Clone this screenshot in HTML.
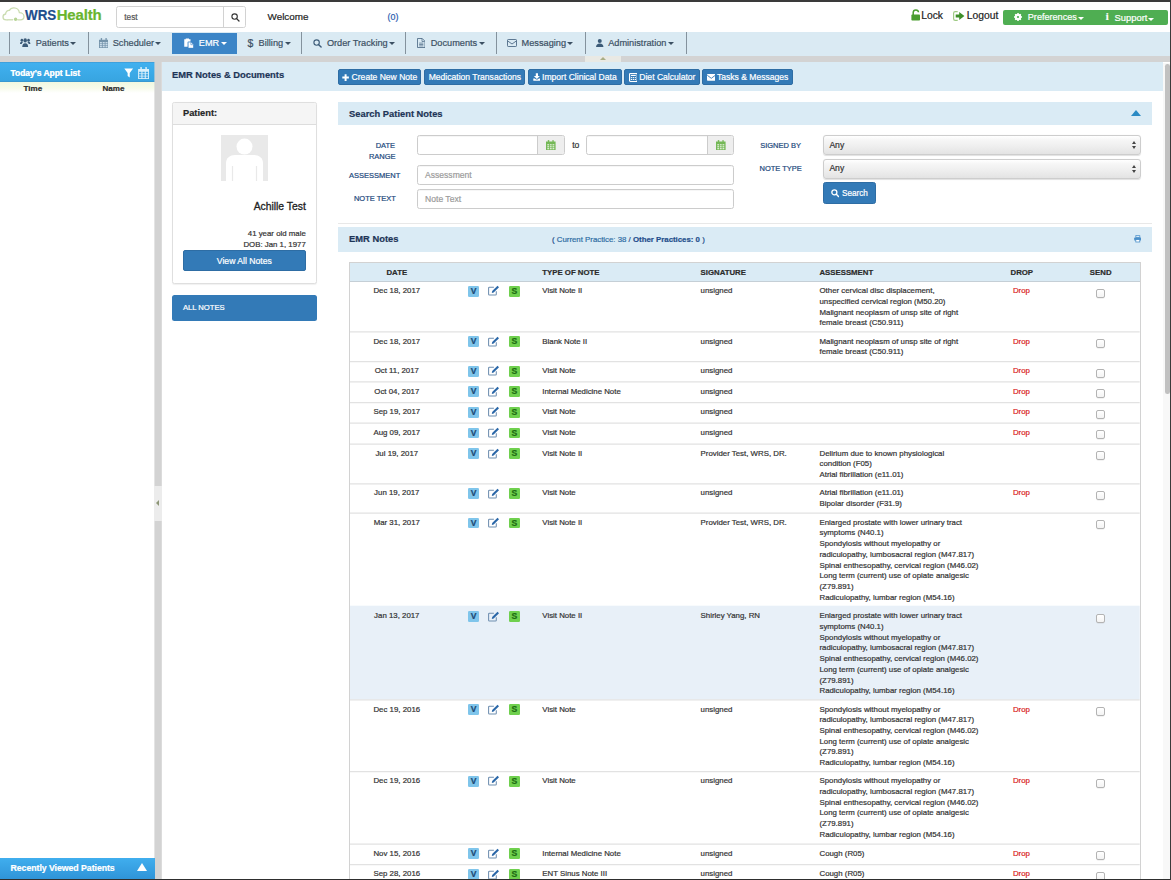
<!DOCTYPE html>
<html><head><meta charset="utf-8"><title>EMR Notes</title>
<style>
*{box-sizing:border-box;margin:0;padding:0}
html,body{width:1171px;height:880px;overflow:hidden;background:#fff}
body{font-family:"Liberation Sans",sans-serif;font-size:8.9px;color:#333;position:relative;-webkit-text-stroke:0.2px}
.abs{position:absolute}
#topline{left:0;top:0;width:1171px;height:1.8px;background:#3a3a3a}
#botline{left:0;top:878.8px;width:1171px;height:2px;background:#2e2e2e}
#rightline{left:1170px;top:0;width:1px;height:880px;background:#3a3a3a}
#logo{left:25px;top:4.7px;font-weight:bold;font-size:15px;line-height:19px;white-space:nowrap}
#logo span{position:absolute;top:0}
#logo .w{left:0.3px;transform:scaleX(0.895);transform-origin:0 0}
#logo .h{left:31.7px;letter-spacing:-0.17px}
#logo .w{color:#1e4e8c}#logo .h{color:#6ab52e}
#srch{left:116px;top:6.2px;width:130.4px;height:21.4px;border:1px solid #d2d2d2;border-radius:2.5px;background:#fff}
#srch .t{position:absolute;left:7.3px;top:4.9px;font-size:8.3px;color:#555}
#srch .b{position:absolute;right:0;top:0;width:22.6px;height:19.4px;border-left:1px solid #d2d2d2;background:#fff;border-radius:0 2px 2px 0}
#welcome{left:267.5px;top:10.5px;font-size:9.9px;color:#222}
#zero{left:387.5px;top:11.5px;font-size:8.9px;color:#2a5db0}
.hl{top:10.4px;font-size:10.3px;color:#222;white-space:nowrap}
#greenbar{left:1002.8px;top:9.7px;width:165.2px;height:14.9px;background:#4fae52;border-radius:2px;color:#fff;font-size:9.1px}
#greenbar span{position:absolute;top:2.7px;white-space:nowrap}
#nav{left:0;top:32px;width:1171px;height:23.5px;background:#daeaf3}
#graybar{left:0;top:55.5px;width:1171px;height:6.5px;background:#d3d3d3}
.nd{position:absolute;top:32px;width:1px;height:22px;background:#84929d}
.ni{position:absolute;top:32.7px;height:21.3px;font-size:9.2px;color:#3c5063;white-space:nowrap}
.ni .tx{position:absolute;top:4.9px}
.ni svg{position:absolute}
.caret{display:inline-block;width:0;height:0;border-left:3.1px solid transparent;border-right:3.1px solid transparent;border-top:3px solid currentColor;vertical-align:middle;margin-left:1.4px;margin-top:1.4px}

.dl{position:absolute;font-size:10.4px}
#emr{background:#3c85c7;color:#fff}
#handle{left:585.3px;top:55.5px;width:35.5px;height:7.6px;background:#e9e9e4}
#handle i{position:absolute;left:14.8px;top:1.6px;width:0;height:0;border-left:3.3px solid transparent;border-right:3.3px solid transparent;border-bottom:3.4px solid #a9ad85}
#sbh{left:0;top:62px;width:154.6px;height:19.8px;background:linear-gradient(#41b1f0,#37a4e0);box-shadow:inset 0 0.8px 0 rgba(60,120,170,.35),inset 0 -0.8px 0 rgba(60,120,170,.35);color:#fff;font-weight:bold;font-size:8.45px}
#sbh .tx{position:absolute;left:10.5px;top:6px;text-shadow:0 0 0.5px rgba(255,255,255,.6)}
#sbr{left:0;top:81.8px;width:154.6px;height:11.2px;background:linear-gradient(#f0f8e0,#f6fbea 55%,#fff);font-weight:bold;font-size:8.05px;color:#2b2b2b}
#split{left:154.6px;top:62.5px;width:7.2px;height:817px;background:#d2d2d2}
#splith{left:154px;top:486px;width:8.2px;height:35px;background:#ececec}
#splith i{position:absolute;left:1.8px;top:13.5px;width:0;height:0;border-top:3.3px solid transparent;border-bottom:3.3px solid transparent;border-right:3.8px solid #8d9677}
#rvp{left:0;top:857.8px;width:154.6px;height:21.2px;background:linear-gradient(#40aeee,#2f94d8);color:#fff;font-weight:bold;font-size:8.75px}
#rvp .tx{position:absolute;left:10.5px;top:5.6px;letter-spacing:-0.05px}
#rvp i{position:absolute;left:137.4px;top:5.2px;width:0;height:0;border-left:5.3px solid transparent;border-right:5.3px solid transparent;border-bottom:8.3px solid #fff}

#scrolltrack{left:1162.6px;top:62.5px;width:7.6px;height:817px;background:#f8f8f8}
#thumb{left:1165.2px;top:64px;width:4.6px;height:330.4px;background:#c1c1c1;border-radius:2.3px}
#titlebar{left:161.8px;top:62px;width:1001px;height:28.6px;background:#daebf5}
#title{left:172px;top:69.6px;font-size:9.35px;font-weight:bold;color:#1d3557;white-space:nowrap}
.tb{position:absolute;top:69.2px;height:15.4px;background:#337ab7;border-radius:2px;color:#fff;font-size:8.57px;white-space:nowrap;border:0.6px solid #2e6da4}
.tb span{position:absolute;top:1.7px}
.tb svg{position:absolute}
/* patient */
#pp{left:171.7px;top:101.5px;width:145px;height:182px;border:1px solid #dfdfdf;border-radius:2.5px;background:#fff;box-shadow:0 0.6px 1px rgba(0,0,0,.06)}
#pph{position:absolute;left:0;top:0;width:143px;height:22.5px;background:#f5f5f5;border-bottom:1px solid #ddd;border-radius:2px 2px 0 0}
#pph span{position:absolute;left:10.3px;top:5.8px;font-weight:bold;font-size:9.3px;color:#262626}
#photo{left:221px;top:135.4px;width:47px;height:45.6px;background:#e9e9e9;overflow:hidden}
#pname{left:172px;width:133.8px;top:200.6px;text-align:right;font-size:10.35px;color:#222;-webkit-text-stroke:0.3px #222}
.pinfo{left:172px;width:133.8px;text-align:right;font-size:7.85px;color:#333}
#van{left:183px;top:250px;width:122.7px;height:21.2px;background:#337ab7;border-radius:2px;color:#fff;font-size:8.65px;text-align:center;line-height:20.6px;border:0.6px solid #2e6da4}
#alln{left:171.7px;top:294.7px;width:145.1px;height:26.2px;background:#337ab7;border-radius:2.5px;color:#fff;font-size:7.65px;line-height:26.4px;padding-left:11.2px}
/* search panel */
.ph{position:absolute;left:338px;width:813.6px;background:#daebf5}
.ph b{position:absolute;left:11.1px;font-size:9.35px;margin-top:0.6px;color:#1d3557;white-space:nowrap}
.lbl{position:absolute;font-size:7.5px;color:#21487c;white-space:nowrap;line-height:10.6px;margin-top:0.8px}
.inp{position:absolute;border:1px solid #ccc;border-radius:2.5px;background:#fff;box-shadow:inset 0 0.6px 0.8px rgba(0,0,0,.08);font-size:8.55px;color:#9b9b9b}
.inp span{position:absolute;left:7.2px;top:3.9px}
.addon{position:absolute;right:0;top:0;bottom:0;width:26.4px;background:#eee;border-left:1px solid #ccc;border-radius:0 2px 2px 0}
.addon svg{position:absolute;left:8.2px;top:3.4px}
.sel{position:absolute;left:822.8px;width:318px;height:19.8px;border:1px solid #cdcdcd;border-radius:3px;background:linear-gradient(#fff,#f6f6f6 22%,#efefef 55%,#e3e3e3);font-size:8.6px;color:#333;box-shadow:0 0.5px 0.8px rgba(0,0,0,.12)}
.sel span{position:absolute;left:5.6px;top:3.7px}
.sel i{position:absolute;right:3.8px;width:0;height:0;border-left:2px solid transparent;border-right:2px solid transparent}
.sel i.u{top:5.2px;border-bottom:3px solid #444}
.sel i.d{top:10px;border-top:3px solid #444}
#sbtn{left:822.8px;top:182.3px;width:53.2px;height:21.4px;background:#337ab7;border-radius:2.5px;color:#fff;font-size:8.2px;border:0.6px solid #2e6da4}
#sbtn span{position:absolute;left:18.2px;top:5.5px}
#hr{left:338px;top:222.6px;width:813.6px;height:1px;background:#e8e8e8}
#cp{left:552px;top:235px;font-size:7.83px;white-space:nowrap;color:#1f4e8c}
#cp a{color:#2e6da4}
#cp b{color:#1f4e8c}
/* table */
#tbl{left:349.3px;top:262.2px;width:791.7px;height:640px;border:1px solid #d2d2d2;border-bottom:0}
#th{position:absolute;left:0;top:0;width:789.7px;height:19.2px;background:#daebf5;border-bottom:1px solid #c5cfd6;font-weight:bold;font-size:7.8px;color:#2b2b2b}
#th span{position:absolute;top:5px;white-space:nowrap}
.tr{position:absolute;left:350.3px;width:789.7px;font-size:7.85px;line-height:10.68px;color:#333}
.tr.hi{}
.tr>div{position:absolute;top:5.35px;white-space:nowrap}
.tr .dt{left:0;width:93px;text-align:center}
.tr .ty{left:192px}
.tr .sg{left:350.3px}
.tr .as{left:469.2px}
.tr .dr{left:646.1px;width:50px;text-align:center;color:#d9221c}
.tr .ck{left:746px;top:7.7px;width:9.2px;height:9.2px;border:1px solid #b3b3b3;border-radius:2px;background:linear-gradient(#fff,#f4f4f4);box-shadow:0 0.4px 0.6px rgba(0,0,0,.1)}
.tr .iv,.tr .is{top:5.1px;width:10.9px;height:10.7px;border-radius:1.3px;font-weight:bold;font-size:8.6px;line-height:10.9px;text-align:center}
.tr .iv{left:117.8px;background:#7fc5eb;color:#1c4a75}
.tr .is{left:158.6px;background:#6fd04e;color:#1d6b12}
.tr .ie{left:137.5px;top:4.5px}
</style></head><body>
<div class="abs" id="topline"></div>

<svg class="abs" style="left:1.5px;top:6.5px" width="24" height="15" viewBox="0 0 24 15"><path d="M5.5 12.8H4.2C2.3 12.8 1 11.5 1 9.9c0-1.5 1.1-2.7 2.6-2.9C3.7 4.6 5.4 3.2 7.4 3.4 8.3 1.8 10 .9 11.900.9c2.900 0 5.200 2.100 5.500 4.800 2.300.1 4.600 1.600 4.600 3.800 0 1.900-1.600 3.300-3.600 3.300h-2.600" fill="none" stroke="#cadcb0" stroke-width="1.300" stroke-linecap="round"/><path d="M5.500 12.800h5.500" stroke="#cadcb0" stroke-width="1.300"/><circle cx="13.600" cy="12.300" r="1.700" fill="#b7d496"/></svg>
<div class="abs" id="logo"><span class="w">WRS</span><span class="h">Health</span></div>
<div class="abs" id="srch"><span class="t">test</span><div class="b"><svg style="position:absolute;left:7px;top:5.6px" width="9" height="9" viewBox="0 0 9 9"><circle cx="3.6" cy="3.6" r="2.7" fill="none" stroke="#333" stroke-width="1.1"/><path d="M5.600 5.600L8 8" stroke="#333" stroke-width="1.300" stroke-linecap="round"/></svg></div></div>
<div class="abs" id="welcome">Welcome</div>
<div class="abs" id="zero">(0)</div>
<svg class="abs" style="left:910.5px;top:8.6px" width="10" height="12" viewBox="0 0 10 12"><path d="M2.2 6V3.6C2.2 1.9 3.4.9 4.9.9c1.400 0 2.500.9 2.600 2.300" fill="none" stroke="#4a9d2f" stroke-width="1.500"/><rect x=".4" y="5.600" width="8.600" height="6" rx=".8" fill="#4a9d2f"/></svg>
<div class="abs hl" style="left:921.2px">Lock</div>
<svg class="abs" style="left:952.9px;top:10.5px" width="11.8" height="10" viewBox="0 0 11.8 10"><path d="M4.7.6H2.2C1.3.6.6 1.300.6 2.200v5.600c0 .9.700 1.600 1.600 1.600h2.500" fill="none" stroke="#9fca84" stroke-width="1.200"/><path d="M2.700 3.500h3.500V.9l5.200 4.100-5.200 4.100V6.500H2.700z" fill="#3f8f2a"/></svg>
<div class="abs hl" style="left:966.8px">Logout</div>
<div class="abs" id="greenbar">
<svg style="position:absolute;left:11.7px;top:3.600px" width="8" height="8" viewBox="0 0 8 8"><circle cx="4" cy="4" r="2.300" fill="none" stroke="#fff" stroke-width="1.900"/><g stroke="#fff" stroke-width="1.500"><path d="M4 0v8M0 4h8M1.200 1.200l5.600 5.600M6.800 1.200L1.200 6.800"/></g><circle cx="4" cy="4" r="1.100" fill="#4fae52"/></svg>
<span style="left:25px">Preferences<i class="caret" style="margin-left:0.8px"></i></span>
<span style="left:103px;top:1.2px;font-family:'Liberation Serif',serif;font-weight:bold;font-size:10.5px">i</span>
<span style="left:111.8px;font-size:9.4px;top:2.5px">Support<i class="caret" style="margin-left:0.8px"></i></span>
</div>
<div class="abs" id="nav"></div><div class="abs" id="graybar"></div><div class="abs" id="handle"><i></i></div><div class="nd" style="left:9px"></div><div class="nd" style="left:88px"></div><div class="nd" style="left:301px"></div><div class="nd" style="left:405px"></div><div class="nd" style="left:496px"></div><div class="nd" style="left:585px"></div><div class="nd" style="left:686px"></div><div class="ni"  style="left:9.5px;width:78px"><svg style="left:10.9px;top:5.4px" width="10.4" height="9.2" viewBox="0 0 21 16" preserveAspectRatio="none"><g fill="#3c5b78"><circle cx="10.5" cy="4.2" r="3.6"/><path d="M4.5 16c0-4.2 1.8-7 6-7s6 2.8 6 7z"/><circle cx="3.8" cy="3.8" r="2.6"/><path d="M0 10.5c0-2.8 1.3-4.4 3.8-4.400 1 0 1.900.3 2.500.9-1.600 1-2.600 2.400-2.900 3.500z"/><circle cx="17.200" cy="3.800" r="2.600"/><path d="M21 10.500c0-2.800-1.300-4.400-3.800-4.400-1 0-1.900.3-2.500.9 1.600 1 2.600 2.400 2.900 3.500z"/></g></svg><span class="tx" style="left:26.2px">Patients<i class="caret"></i></span></div><div class="ni"  style="left:87.8px;width:84px"><svg style="left:11.2px;top:5.4px" width="9.5" height="10" viewBox="0 0 19 20"><g fill="#7493aa"><rect x="3.5" y="0" width="2.6" height="5" rx="1"/><rect x="12.9" y="0" width="2.6" height="5" rx="1"/><path d="M0 3.500h19V20H0z"/></g><g fill="#c9dbe8"><rect x="1.8" y="8" width="4" height="2.8"/><rect x="7.4" y="8" width="4" height="2.8"/><rect x="13" y="8" width="4" height="2.8"/><rect x="1.8" y="11.9" width="4" height="2.8"/><rect x="7.4" y="11.9" width="4" height="2.8"/><rect x="13" y="11.9" width="4" height="2.8"/><rect x="1.8" y="15.8" width="4" height="2.8"/><rect x="7.4" y="15.8" width="4" height="2.8"/><rect x="13" y="15.8" width="4" height="2.8"/></g></svg><span class="tx" style="left:24.9px">Scheduler<i class="caret"></i></span></div><div class="ni" id="emr" style="left:172.2px;width:64.8px"><svg style="left:11.4px;top:5.2px" width="10" height="10.5" viewBox="0 0 20 21"><path d="M.5 2.500h3V1H10v1.500h3V7.500H7.500v10H.5z" fill="#fff"/><path d="M8.300 8.200h5.800l4.900 4.900v7.400H8.300z" fill="#fff" stroke="#3c85c7" stroke-width="1.300"/><path d="M13.700 8.400v5h5" fill="none" stroke="#3c85c7" stroke-width="1.200"/></svg><span class="tx" style="left:26.6px">EMR<i class="caret"></i></span></div><div class="ni"  style="left:237px;width:64px"><span style="left:10.4px;top:5.4px" class="dl">$</span><span class="tx" style="left:21.6px">Billing<i class="caret"></i></span></div><div class="ni"  style="left:301.3px;width:104px"><svg style="left:11.4px;top:6.4px" width="9" height="9" viewBox="0 0 9 9"><circle cx="3.600" cy="3.600" r="2.700" fill="none" stroke="#3c5b78" stroke-width="1.100"/><path d="M5.700 5.700L8.100 8.100" stroke="#3c5b78" stroke-width="1.400" stroke-linecap="round"/></svg><span class="tx" style="left:25.6px">Order Tracking<i class="caret"></i></span></div><div class="ni"  style="left:405.3px;width:90px"><svg style="left:11.6px;top:5.4px" width="8.5" height="10" viewBox="0 0 17 20"><path d="M1 1h9.500L16 6.500V19H1z" fill="none" stroke="#3c5b78" stroke-width="1.500"/><path d="M10 1.500v5.500h5.500M4.300 10.200h8.400M4.300 13h8.400M4.300 15.800h8.400" fill="none" stroke="#3c5b78" stroke-width="1.300"/></svg><span class="tx" style="left:25.4px">Documents<i class="caret"></i></span></div><div class="ni"  style="left:496px;width:89px"><svg style="left:10.8px;top:6.7px" width="10" height="8" viewBox="0 0 20 16"><rect x="1" y="1" width="18" height="14" rx="1.500" fill="none" stroke="#3c5b78" stroke-width="1.600"/><path d="M1.500 4l8.500 6 8.500-6" fill="none" stroke="#3c5b78" stroke-width="1.600"/></svg><span class="tx" style="left:25.6px">Messaging<i class="caret"></i></span></div><div class="ni"  style="left:585.2px;width:101px"><svg style="left:11px;top:6px" width="7.5" height="8.5" viewBox="0 0 15 17"><g fill="#3c5b78"><circle cx="7.500" cy="4.200" r="4"/><path d="M0 17c0-5.200 2.400-8.200 7.500-8.200S15 11.800 15 17z"/></g></svg><span class="tx" style="left:23px">Administration<i class="caret"></i></span></div>
<div class="abs" id="sbh"><span class="tx">Today's Appt List</span>
<svg style="position:absolute;left:124.2px;top:5.5px" width="9.4" height="10.4" viewBox="0 0 9 9" preserveAspectRatio="none"><path d="M.3.4h8.400L5.500 4.300V8.200L3.500 6.900V4.300z" fill="#fff"/></svg>
<svg style="position:absolute;left:137.6px;top:5px" width="11.2" height="12" viewBox="0 0 22 24"><g fill="#d9f0fb"><rect x="4.5" y="0" width="3" height="6" rx="1.2"/><rect x="14.5" y="0" width="3" height="6" rx="1.2"/><path d="M0 4h22v20H0z"/></g><g fill="#3ea6e3"><rect x="2" y="9.5" width="4.6" height="3.3"/><rect x="8.7" y="9.5" width="4.6" height="3.3"/><rect x="15.4" y="9.5" width="4.6" height="3.3"/><rect x="2" y="14.2" width="4.6" height="3.3"/><rect x="8.7" y="14.2" width="4.6" height="3.3"/><rect x="15.4" y="14.2" width="4.6" height="3.3"/><rect x="2" y="18.9" width="4.6" height="3.3"/><rect x="8.7" y="18.9" width="4.6" height="3.3"/><rect x="15.4" y="18.9" width="4.6" height="3.3"/></g></svg>
</div>
<div class="abs" id="sbr"><span style="position:absolute;left:23.5px;top:1.8px">Time</span><span style="position:absolute;left:102.5px;top:1.8px">Name</span></div>
<svg class="abs" style="left:150px;top:62px" width="16" height="818" viewBox="150 62 16 818"><rect x="154.4" y="62" width="7.4" height="818" fill="#d3d3d3"/></svg><div class="abs" id="splith"><i></i></div>
<div class="abs" id="rvp"><span class="tx">Recently Viewed Patients</span><i></i></div>
<div class="abs" id="scrolltrack"></div><div class="abs" id="thumb"></div><div class="abs" id="titlebar"></div><div class="abs" id="title">EMR Notes &amp; Documents</div><div class="tb" style="left:338.2px;width:83px"><svg style="left:3.3px;top:3.7px" width="7.2" height="7.2" viewBox="0 0 7 7"><path d="M3.5.3v6.400M.3 3.500h6.400" stroke="#fff" stroke-width="1.900"/></svg><span style="left:12.4px">Create New Note</span></div><div class="tb" style="left:424px;width:101.4px"><span style="left:3.7px">Medication Transactions</span></div><div class="tb" style="left:528px;width:93.6px"><svg style="left:3.7px;top:3.2px" width="7.8" height="8" viewBox="0 0 7.6 8"><path d="M2.700.2h2.200v2.900h1.900L3.800 5.900.8 3.100h1.900z" fill="#fff"/><path d="M.2 5.400h1.600l1.200 1.100h1.600l1.200-1.100h1.600v2.400H.2z" fill="#fff"/></svg><span style="left:13px">Import Clinical Data</span></div><div class="tb" style="left:624.2px;width:75.8px"><svg style="left:3.5px;top:2.9px" width="8.8" height="9" viewBox="0 0 7.6 8.6" preserveAspectRatio="none"><rect x=".5" y=".5" width="6.600" height="7.600" rx=".6" fill="none" stroke="#fff" stroke-width="1"/><path d="M1.700 2.300h4.200" stroke="#fff" stroke-width="1.100"/><g fill="#fff"><rect x="1.600" y="3.900" width="1.100" height="1"/><rect x="3.250" y="3.900" width="1.100" height="1"/><rect x="4.900" y="3.900" width="1.100" height="1"/><rect x="1.600" y="5.700" width="1.100" height="1"/><rect x="3.250" y="5.700" width="1.100" height="1"/><rect x="4.900" y="5.700" width="1.100" height="1"/></g></svg><span style="left:14.1px">Diet Calculator</span></div><div class="tb" style="left:702px;width:90.8px"><svg style="left:3.9px;top:4px" width="8.600" height="6.800" viewBox="0 0 8.600 6.800"><rect width="8.600" height="6.800" rx=".8" fill="#fff"/><path d="M.3 1.300l4 3 4-3" fill="none" stroke="#337ab7" stroke-width=".9"/></svg><span style="left:13.9px">Tasks &amp; Messages</span></div><div class="abs" id="pp"><div id="pph"><span>Patient:</span></div></div><div class="abs" id="photo"><svg width="47" height="45.6" viewBox="0 0 47 45.6"><circle cx="23.500" cy="11.600" r="8" fill="#fff"/><path d="M5 46V28c0-5 4-8 9-8h19c5 0 9 3 9 8v18z" fill="#fff"/><path d="M11.500 46V31M35.500 46V31" stroke="#e9e9e9" stroke-width="1.200"/></svg></div><div class="abs" id="pname">Achille Test</div><div class="abs pinfo" style="top:229.2px">41 year old male</div><div class="abs pinfo" style="top:239.5px">DOB: Jan 1, 1977</div><div class="abs" id="van">View All Notes</div><div class="abs" id="alln">ALL NOTES</div><div class="ph" style="top:101.8px;height:23px"><b style="top:6.2px">Search Patient Notes</b><i style="position:absolute;left:792.8px;top:7.9px;width:0;height:0;border-left:5.1px solid transparent;border-right:5.1px solid transparent;border-bottom:6px solid #2a8ac4"></i></div><div class="lbl" style="left:368.9px;top:140.2px;width:26.2px;text-align:right;white-space:normal">DATE RANGE</div><div class="lbl" style="left:349.1px;top:169.900px">ASSESSMENT</div><div class="lbl" style="left:353.9px;top:193.700px">NOTE TEXT</div><div class="lbl" style="left:760.2px;top:139.900px">SIGNED BY</div><div class="lbl" style="left:759.5px;top:163.500px">NOTE TYPE</div><div class="inp" style="left:416.9px;top:135.2px;width:147.8px;height:19.9px"><div class="addon"><svg width="9.6" height="10.2" viewBox="0 0 9.6 10.2"><g fill="#74b856"><rect x="1.9" y="0" width="1.3" height="2.6" rx=".5"/><rect x="6.4" y="0" width="1.3" height="2.6" rx=".5"/><path d="M0 1.500h9.600v8.700H0z"/></g><g fill="#e6f2df"><rect x="1.3" y="4.2" width="1.8" height="1.2"/><rect x="3.9" y="4.2" width="1.8" height="1.2"/><rect x="6.5" y="4.2" width="1.8" height="1.2"/><rect x="1.3" y="6.2" width="1.8" height="1.2"/><rect x="3.9" y="6.2" width="1.8" height="1.2"/><rect x="6.5" y="6.2" width="1.8" height="1.2"/><rect x="1.3" y="8.1" width="1.8" height="1.2"/><rect x="3.9" y="8.1" width="1.8" height="1.2"/><rect x="6.5" y="8.1" width="1.8" height="1.2"/></g></svg></div></div><div class="abs" style="left:572.2px;top:140.200px;font-size:8.6px;color:#333">to</div><div class="inp" style="left:586.3px;top:135.2px;width:147.9px;height:19.9px"><div class="addon"><svg width="9.6" height="10.2" viewBox="0 0 9.6 10.2"><g fill="#74b856"><rect x="1.9" y="0" width="1.3" height="2.6" rx=".5"/><rect x="6.4" y="0" width="1.3" height="2.6" rx=".5"/><path d="M0 1.500h9.600v8.700H0z"/></g><g fill="#e6f2df"><rect x="1.3" y="4.2" width="1.8" height="1.2"/><rect x="3.9" y="4.2" width="1.8" height="1.2"/><rect x="6.5" y="4.2" width="1.8" height="1.2"/><rect x="1.3" y="6.2" width="1.8" height="1.2"/><rect x="3.9" y="6.2" width="1.8" height="1.2"/><rect x="6.5" y="6.2" width="1.8" height="1.2"/><rect x="1.3" y="8.1" width="1.8" height="1.2"/><rect x="3.9" y="8.1" width="1.8" height="1.2"/><rect x="6.5" y="8.1" width="1.8" height="1.2"/></g></svg></div></div><div class="inp" style="left:416.9px;top:165.2px;width:317.300px;height:19.6px"><span>Assessment</span></div><div class="inp" style="left:416.9px;top:188.9px;width:317.300px;height:19.8px"><span>Note Text</span></div><div class="sel" style="top:135.300px"><span>Any</span><i class="u"></i><i class="d"></i></div><div class="sel" style="top:158.800px"><span>Any</span><i class="u"></i><i class="d"></i></div><div class="abs" id="sbtn"><svg style="position:absolute;left:6.8px;top:6.2px" width="8.400" height="8.400" viewBox="0 0 9 9"><circle cx="3.600" cy="3.600" r="2.700" fill="none" stroke="#fff" stroke-width="1.400"/><path d="M5.700 5.700L8.100 8.100" stroke="#fff" stroke-width="1.600" stroke-linecap="round"/></svg><span>Search</span></div><div class="abs" id="hr"></div><div class="ph" style="top:227.300px;height:24.300px"><b style="top:5.9px">EMR Notes</b></div><div class="abs" id="cp">( <a>Current Practice: 38</a> / <b>Other Practices: 0</b> )</div><svg class="abs" style="left:1133.600px;top:235.200px" width="7.600" height="7.400" viewBox="0 0 7.600 7.400"><path d="M1.800.4h4v2.200h-4z" fill="none" stroke="#4a8fc9" stroke-width=".8"/><rect x=".2" y="2.600" width="7.200" height="3" rx=".7" fill="#4a8fc9"/><rect x="1.800" y="4.600" width="4" height="2.400" fill="#fff" stroke="#4a8fc9" stroke-width=".8"/></svg><div class="abs" id="tbl"><div id="th"><span style="left:0;width:93px;text-align:center">DATE</span><span style="left:192px">TYPE OF NOTE</span><span style="left:350.300px">SIGNATURE</span><span style="left:469.200px">ASSESSMENT</span><span style="left:646.500px;width:50px;text-align:center">DROP</span><span style="left:725.400px;width:50px;text-align:center">SEND</span></div></div><svg class="abs" style="left:350.3px;top:281px;pointer-events:none" width="789.7" height="599" viewBox="350.3 281 789.7 599"><rect x="350.3" y="605.70" width="789.7" height="93.60" fill="#e8f0f8"/><path d="M350.3 331.95H1140" stroke="#e2e2e2" stroke-width="1.25"/><path d="M350.3 361.55H1140" stroke="#e2e2e2" stroke-width="1.25"/><path d="M350.3 381.95H1140" stroke="#e2e2e2" stroke-width="1.25"/><path d="M350.3 402.65H1140" stroke="#e2e2e2" stroke-width="1.25"/><path d="M350.3 423.15H1140" stroke="#e2e2e2" stroke-width="1.25"/><path d="M350.3 444.05H1140" stroke="#e2e2e2" stroke-width="1.25"/><path d="M350.3 483.85H1140" stroke="#e2e2e2" stroke-width="1.25"/><path d="M350.3 513.15H1140" stroke="#e2e2e2" stroke-width="1.25"/><path d="M350.3 699.95H1140" stroke="#e2e2e2" stroke-width="1.25"/><path d="M350.3 771.55H1140" stroke="#e2e2e2" stroke-width="1.25"/><path d="M350.3 844.05H1140" stroke="#e2e2e2" stroke-width="1.25"/><path d="M350.3 864.75H1140" stroke="#e2e2e2" stroke-width="1.25"/></svg><div class="tr" style="top:280.85px;height:50.40px"><div class="dt">Dec 18, 2017</div><div class="iv">V</div><svg class="ie" style="position:absolute" width="11.600" height="11" viewBox="0 0 11.600 11"><path d="M8.300 6.300v2.900c0 .5-.4.900-.9.900H1.500c-.5 0-.9-.4-.9-.9V3.100c0-.5.400-.9.900-.9h4.400" fill="none" stroke="#6f8fb0" stroke-width="1.050"/><path d="M3.800 8l.4-2L9.500.7l1.500 1.500-5.300 5.300z" fill="#2a67a8"/></svg><div class="is">S</div><div class="ty">Visit Note II</div><div class="sg">unsigned</div><div class="as">Other cervical disc displacement,<br>unspecified cervical region (M50.20)<br>Malignant neoplasm of unsp site of right<br>female breast (C50.911)</div><div class="dr">Drop</div><div class="ck"></div></div><div class="tr" style="top:331.25px;height:29.60px"><div class="dt">Dec 18, 2017</div><div class="iv">V</div><svg class="ie" style="position:absolute" width="11.600" height="11" viewBox="0 0 11.600 11"><path d="M8.300 6.300v2.900c0 .5-.4.900-.9.900H1.500c-.5 0-.9-.4-.9-.9V3.100c0-.5.400-.9.900-.9h4.400" fill="none" stroke="#6f8fb0" stroke-width="1.050"/><path d="M3.800 8l.4-2L9.500.7l1.500 1.500-5.300 5.300z" fill="#2a67a8"/></svg><div class="is">S</div><div class="ty">Blank Note II</div><div class="sg">unsigned</div><div class="as">Malignant neoplasm of unsp site of right<br>female breast (C50.911)</div><div class="dr">Drop</div><div class="ck"></div></div><div class="tr" style="top:360.85px;height:20.40px"><div class="dt">Oct 11, 2017</div><div class="iv">V</div><svg class="ie" style="position:absolute" width="11.600" height="11" viewBox="0 0 11.600 11"><path d="M8.300 6.300v2.900c0 .5-.4.900-.9.900H1.500c-.5 0-.9-.4-.9-.9V3.100c0-.5.400-.9.900-.9h4.400" fill="none" stroke="#6f8fb0" stroke-width="1.050"/><path d="M3.800 8l.4-2L9.500.7l1.500 1.500-5.300 5.300z" fill="#2a67a8"/></svg><div class="is">S</div><div class="ty">Visit Note</div><div class="sg">unsigned</div><div class="as"></div><div class="dr">Drop</div><div class="ck"></div></div><div class="tr" style="top:381.25px;height:20.70px"><div class="dt">Oct 04, 2017</div><div class="iv">V</div><svg class="ie" style="position:absolute" width="11.600" height="11" viewBox="0 0 11.600 11"><path d="M8.300 6.300v2.900c0 .5-.4.900-.9.900H1.500c-.5 0-.9-.4-.9-.9V3.100c0-.5.400-.9.900-.9h4.400" fill="none" stroke="#6f8fb0" stroke-width="1.050"/><path d="M3.800 8l.4-2L9.500.7l1.500 1.500-5.300 5.300z" fill="#2a67a8"/></svg><div class="is">S</div><div class="ty">Internal Medicine Note</div><div class="sg">unsigned</div><div class="as"></div><div class="dr">Drop</div><div class="ck"></div></div><div class="tr" style="top:401.95px;height:20.50px"><div class="dt">Sep 19, 2017</div><div class="iv">V</div><svg class="ie" style="position:absolute" width="11.600" height="11" viewBox="0 0 11.600 11"><path d="M8.300 6.300v2.900c0 .5-.4.900-.9.900H1.500c-.5 0-.9-.4-.9-.9V3.100c0-.5.400-.9.900-.9h4.400" fill="none" stroke="#6f8fb0" stroke-width="1.050"/><path d="M3.800 8l.4-2L9.500.7l1.500 1.500-5.300 5.300z" fill="#2a67a8"/></svg><div class="is">S</div><div class="ty">Visit Note</div><div class="sg">unsigned</div><div class="as"></div><div class="dr">Drop</div><div class="ck"></div></div><div class="tr" style="top:422.45px;height:20.90px"><div class="dt">Aug 09, 2017</div><div class="iv">V</div><svg class="ie" style="position:absolute" width="11.600" height="11" viewBox="0 0 11.600 11"><path d="M8.300 6.300v2.900c0 .5-.4.900-.9.900H1.500c-.5 0-.9-.4-.9-.9V3.100c0-.5.400-.9.900-.9h4.400" fill="none" stroke="#6f8fb0" stroke-width="1.050"/><path d="M3.800 8l.4-2L9.500.7l1.500 1.500-5.300 5.300z" fill="#2a67a8"/></svg><div class="is">S</div><div class="ty">Visit Note</div><div class="sg">unsigned</div><div class="as"></div><div class="dr">Drop</div><div class="ck"></div></div><div class="tr" style="top:443.35px;height:39.80px"><div class="dt">Jul 19, 2017</div><div class="iv">V</div><svg class="ie" style="position:absolute" width="11.600" height="11" viewBox="0 0 11.600 11"><path d="M8.300 6.300v2.900c0 .5-.4.900-.9.900H1.500c-.5 0-.9-.4-.9-.9V3.100c0-.5.400-.9.900-.9h4.400" fill="none" stroke="#6f8fb0" stroke-width="1.050"/><path d="M3.800 8l.4-2L9.500.7l1.500 1.500-5.300 5.300z" fill="#2a67a8"/></svg><div class="is">S</div><div class="ty">Visit Note II</div><div class="sg">Provider Test, WRS, DR.</div><div class="as">Delirium due to known physiological<br>condition (F05)<br>Atrial fibrillation (e11.01)</div><div class="ck"></div></div><div class="tr" style="top:483.15px;height:29.30px"><div class="dt">Jun 19, 2017</div><div class="iv">V</div><svg class="ie" style="position:absolute" width="11.600" height="11" viewBox="0 0 11.600 11"><path d="M8.300 6.300v2.900c0 .5-.4.900-.9.900H1.500c-.5 0-.9-.4-.9-.9V3.100c0-.5.400-.9.900-.9h4.400" fill="none" stroke="#6f8fb0" stroke-width="1.050"/><path d="M3.800 8l.4-2L9.500.7l1.500 1.500-5.300 5.300z" fill="#2a67a8"/></svg><div class="is">S</div><div class="ty">Visit Note</div><div class="sg">unsigned</div><div class="as">Atrial fibrillation (e11.01)<br>Bipolar disorder (F31.9)</div><div class="dr">Drop</div><div class="ck"></div></div><div class="tr" style="top:512.45px;height:93.60px"><div class="dt">Mar 31, 2017</div><div class="iv">V</div><svg class="ie" style="position:absolute" width="11.600" height="11" viewBox="0 0 11.600 11"><path d="M8.300 6.300v2.900c0 .5-.4.900-.9.900H1.500c-.5 0-.9-.4-.9-.9V3.100c0-.5.400-.9.900-.9h4.400" fill="none" stroke="#6f8fb0" stroke-width="1.050"/><path d="M3.800 8l.4-2L9.500.7l1.500 1.500-5.300 5.300z" fill="#2a67a8"/></svg><div class="is">S</div><div class="ty">Visit Note II</div><div class="sg">Provider Test, WRS, DR.</div><div class="as">Enlarged prostate with lower urinary tract<br>symptoms (N40.1)<br>Spondylosis without myelopathy or<br>radiculopathy, lumbosacral region (M47.817)<br>Spinal enthesopathy, cervical region (M46.02)<br>Long term (current) use of opiate analgesic<br>(Z79.891)<br>Radiculopathy, lumbar region (M54.16)</div><div class="ck"></div></div><div class="tr hi" style="top:606.05px;height:93.20px"><div class="dt">Jan 13, 2017</div><div class="iv">V</div><svg class="ie" style="position:absolute" width="11.600" height="11" viewBox="0 0 11.600 11"><path d="M8.300 6.300v2.900c0 .5-.4.900-.9.900H1.500c-.5 0-.9-.4-.9-.9V3.100c0-.5.400-.9.900-.9h4.400" fill="none" stroke="#6f8fb0" stroke-width="1.050"/><path d="M3.800 8l.4-2L9.500.7l1.500 1.500-5.300 5.300z" fill="#2a67a8"/></svg><div class="is">S</div><div class="ty">Visit Note II</div><div class="sg">Shirley Yang, RN</div><div class="as">Enlarged prostate with lower urinary tract<br>symptoms (N40.1)<br>Spondylosis without myelopathy or<br>radiculopathy, lumbosacral region (M47.817)<br>Spinal enthesopathy, cervical region (M46.02)<br>Long term (current) use of opiate analgesic<br>(Z79.891)<br>Radiculopathy, lumbar region (M54.16)</div><div class="ck"></div></div><div class="tr" style="top:699.25px;height:71.60px"><div class="dt">Dec 19, 2016</div><div class="iv">V</div><svg class="ie" style="position:absolute" width="11.600" height="11" viewBox="0 0 11.600 11"><path d="M8.300 6.300v2.900c0 .5-.4.900-.9.900H1.500c-.5 0-.9-.4-.9-.9V3.100c0-.5.400-.9.900-.9h4.400" fill="none" stroke="#6f8fb0" stroke-width="1.050"/><path d="M3.800 8l.4-2L9.500.7l1.500 1.500-5.300 5.300z" fill="#2a67a8"/></svg><div class="is">S</div><div class="ty">Visit Note</div><div class="sg">unsigned</div><div class="as">Spondylosis without myelopathy or<br>radiculopathy, lumbosacral region (M47.817)<br>Spinal enthesopathy, cervical region (M46.02)<br>Long term (current) use of opiate analgesic<br>(Z79.891)<br>Radiculopathy, lumbar region (M54.16)</div><div class="dr">Drop</div><div class="ck"></div></div><div class="tr" style="top:770.85px;height:72.50px"><div class="dt">Dec 19, 2016</div><div class="iv">V</div><svg class="ie" style="position:absolute" width="11.600" height="11" viewBox="0 0 11.600 11"><path d="M8.300 6.300v2.900c0 .5-.4.900-.9.900H1.500c-.5 0-.9-.4-.9-.9V3.100c0-.5.400-.9.900-.9h4.400" fill="none" stroke="#6f8fb0" stroke-width="1.050"/><path d="M3.800 8l.4-2L9.500.7l1.500 1.500-5.300 5.300z" fill="#2a67a8"/></svg><div class="is">S</div><div class="ty">Visit Note</div><div class="sg">unsigned</div><div class="as">Spondylosis without myelopathy or<br>radiculopathy, lumbosacral region (M47.817)<br>Spinal enthesopathy, cervical region (M46.02)<br>Long term (current) use of opiate analgesic<br>(Z79.891)<br>Radiculopathy, lumbar region (M54.16)</div><div class="dr">Drop</div><div class="ck"></div></div><div class="tr" style="top:843.35px;height:20.70px"><div class="dt">Nov 15, 2016</div><div class="iv">V</div><svg class="ie" style="position:absolute" width="11.600" height="11" viewBox="0 0 11.600 11"><path d="M8.300 6.300v2.900c0 .5-.4.900-.9.900H1.500c-.5 0-.9-.4-.9-.9V3.100c0-.5.400-.9.900-.9h4.400" fill="none" stroke="#6f8fb0" stroke-width="1.050"/><path d="M3.800 8l.4-2L9.500.7l1.500 1.500-5.300 5.300z" fill="#2a67a8"/></svg><div class="is">S</div><div class="ty">Internal Medicine Note</div><div class="sg">unsigned</div><div class="as">Cough (R05)</div><div class="dr">Drop</div><div class="ck"></div></div><div class="tr" style="top:864.05px;height:20.65px"><div class="dt">Sep 28, 2016</div><div class="iv">V</div><svg class="ie" style="position:absolute" width="11.600" height="11" viewBox="0 0 11.600 11"><path d="M8.300 6.300v2.900c0 .5-.4.900-.9.900H1.500c-.5 0-.9-.4-.9-.9V3.100c0-.5.400-.9.900-.9h4.400" fill="none" stroke="#6f8fb0" stroke-width="1.050"/><path d="M3.800 8l.4-2L9.500.7l1.500 1.500-5.300 5.300z" fill="#2a67a8"/></svg><div class="is">S</div><div class="ty">ENT Sinus Note III</div><div class="sg">unsigned</div><div class="as">Cough (R05)</div><div class="dr">Drop</div><div class="ck"></div></div>
<div class="abs" id="botline"></div><div class="abs" id="rightline"></div>
</body></html>
